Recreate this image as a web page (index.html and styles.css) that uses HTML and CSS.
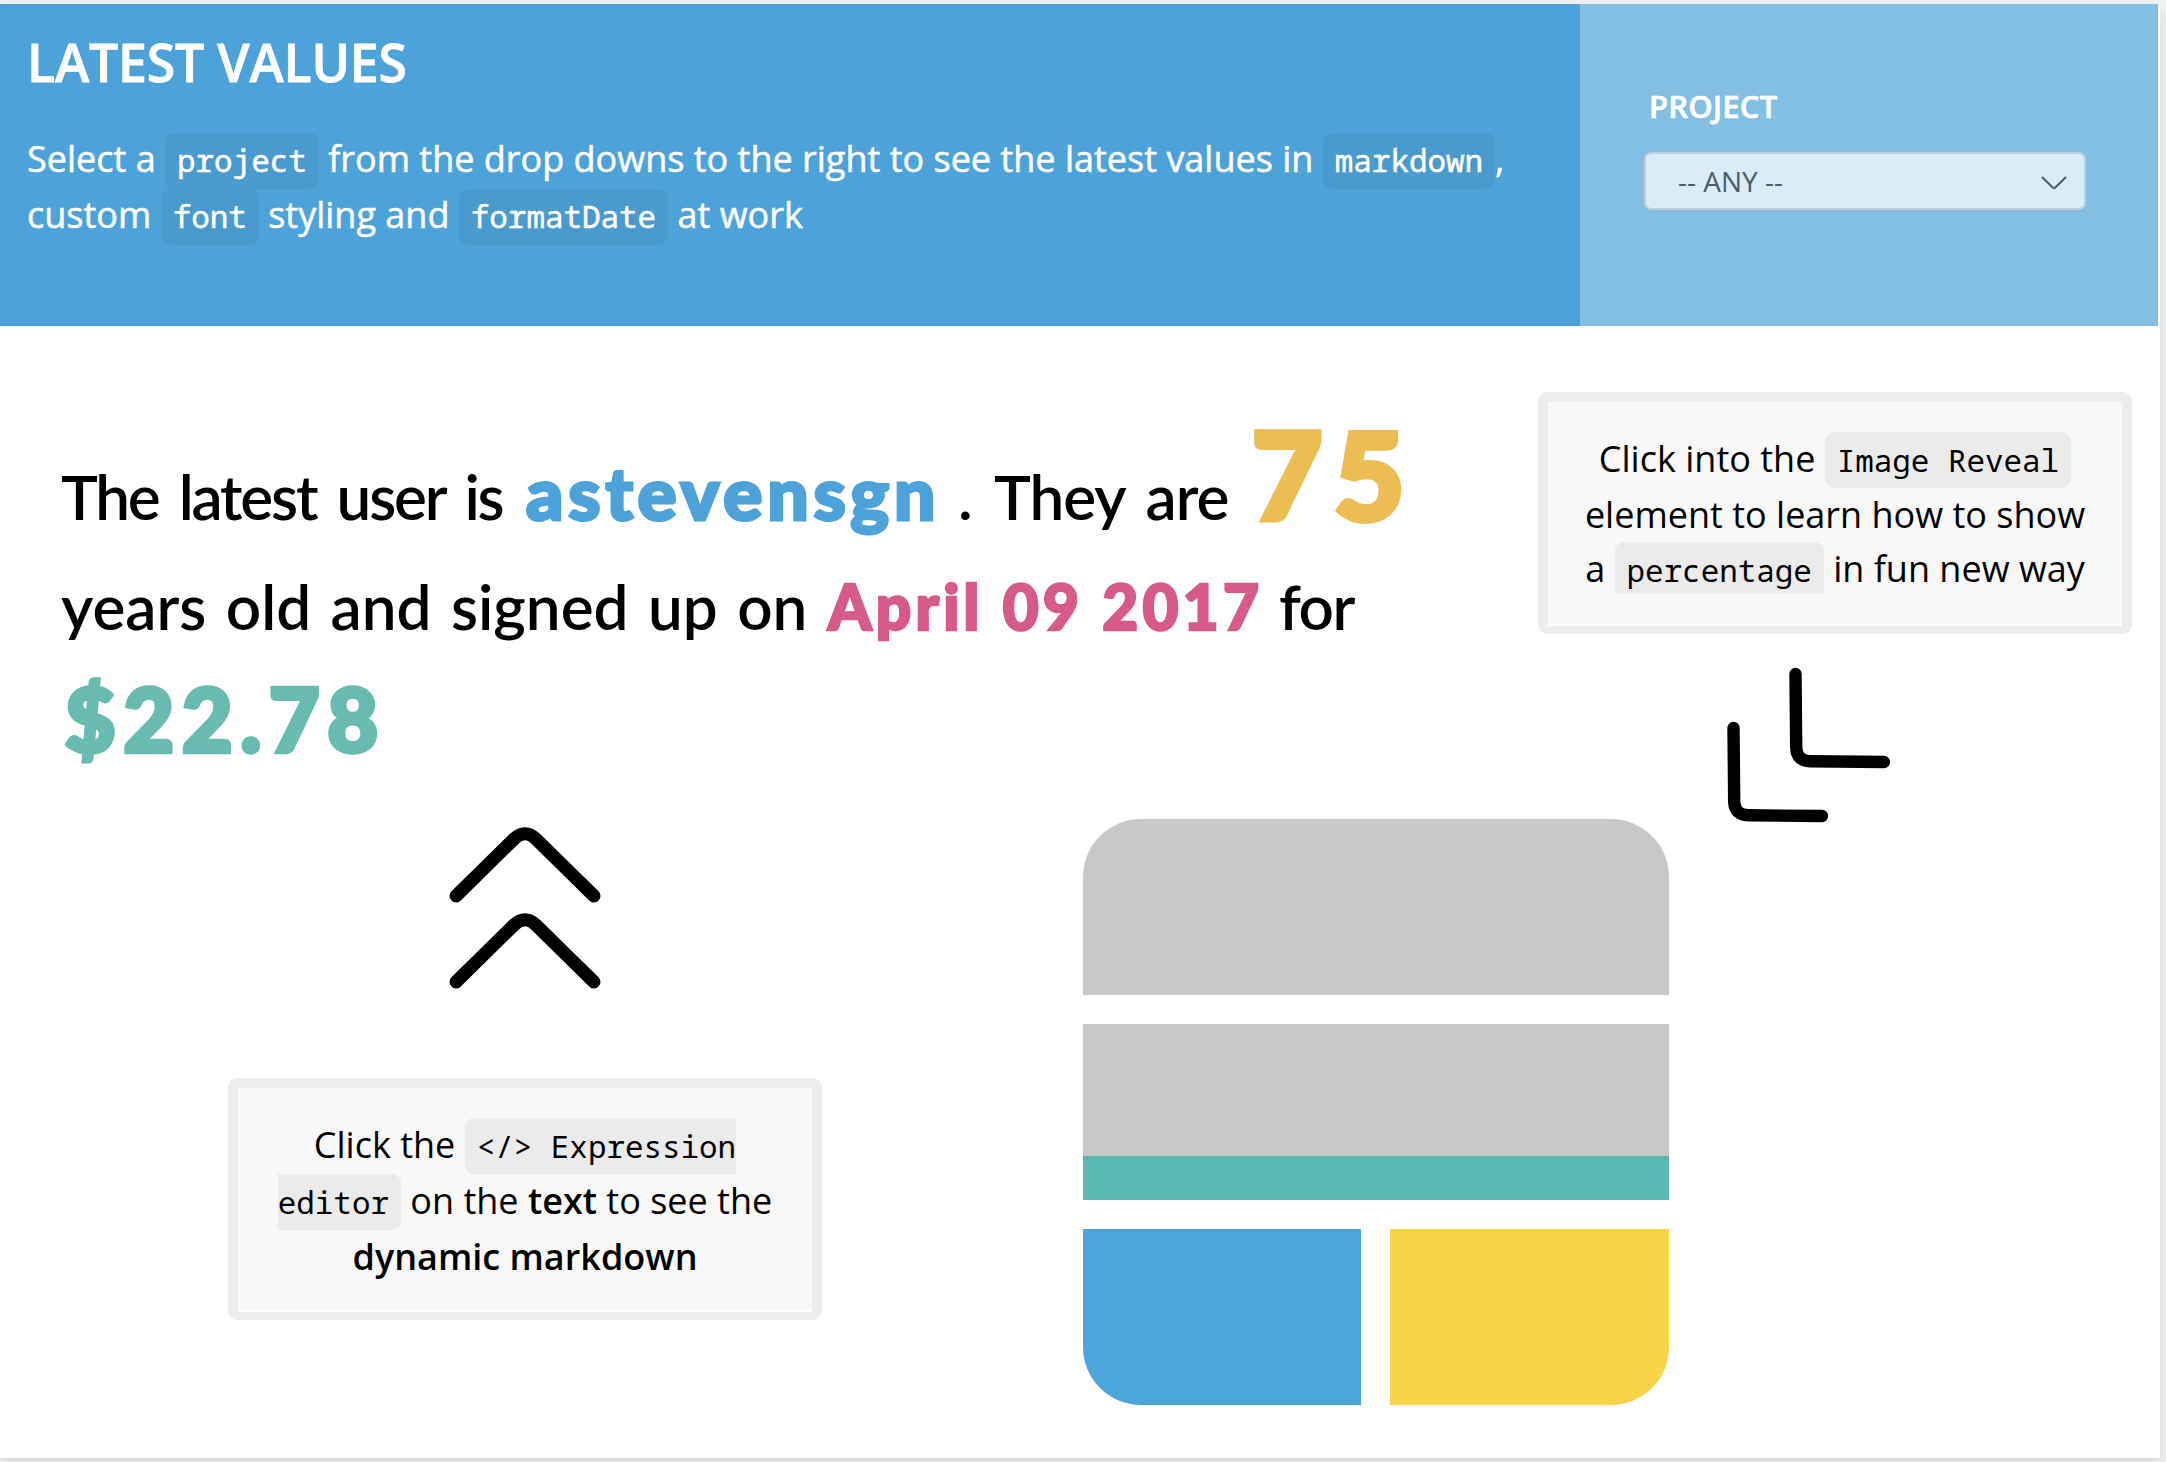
FILE: index.html
```
<!DOCTYPE html>
<html lang="en">
<head>
<meta charset="utf-8">
<title>Latest Values</title>
<link rel="stylesheet" href="styles.css">
</head>
<body>
<main class="page">
  <header class="header">
    <section class="intro">
      <h1 class="intro-title">LATEST VALUES</h1>
      <p class="intro-text">Select a <code>project</code> from the drop downs to the right to see the latest values in <code>markdown</code>,<br>custom <code>font</code> styling and <code>formatDate</code> at work</p>
    </section>
    <section class="filter">
      <div class="filter-label">PROJECT</div>
      <div class="select">
        <span>-- ANY --</span>
        <svg class="select-arrow" width="26" height="14" viewBox="0 0 26 14"><path d="M1.5 1.5 L12 11.8 Q13 12.6 14 11.8 L24.500 1.500" fill="none" stroke="#4a5d68" stroke-width="2" stroke-linecap="round"/></svg>
      </div>
    </section>
  </header>

  <div class="top-row">
    <div class="statement">
      <div class="line line-1">
        <span class="w-user-is">The latest user is</span><span class="name">astevensgn</span><span class="w-dot">.</span><span class="w-they">They are</span><span class="age">75</span>
      </div>
      <div class="line line-2">
        <span class="w-years">years old and signed up on</span><span class="date">April 09 2017</span><span class="w-for">for</span>
      </div>
      <div class="line line-3"><span class="amount">$22.78</span></div>
    </div>
    <aside class="hint-column">
      <div class="card">
        <p>Click into the <code>Image Reveal</code></p>
        <p>element to learn how to show</p>
        <p class="last-line">a <code>percentage</code> in fun new way</p>
      </div>
      <svg class="arrow-corner" width="170" height="160" viewBox="0 0 170 160"><g fill="none" stroke="#000" stroke-width="12.400" stroke-linecap="round"><path d="M67.500 8 L68.200 82 Q69 95 82 95.300 L156 96"/><path d="M5.500 62 L6.200 136 Q7 149 20 149.300 L94 150"/></g></svg>
    </aside>
  </div>

  <div class="bottom-row">
    <div class="guide-column">
      <svg class="arrow-up" width="156" height="168" viewBox="0 0 156 168"><g fill="none" stroke="#000" stroke-width="13" stroke-linecap="round"><path d="M9 76 L67 19 Q78 8.500 89 19 L147 76"/><path d="M9 162 L67 105 Q78 94.500 89 105 L147 162"/></g></svg>
      <div class="card">
        <p>Click the <code class="open-end">&lt;/&gt; Expression</code></p>
        <p><code class="open-start">editor</code> on the <b>text</b> to see the</p>
        <p><b>dynamic markdown</b></p>
      </div>
    </div>
    <div class="reveal">
      <div class="block block-top"></div>
      <div class="block block-middle"><div class="fill"></div></div>
      <div class="block-pair"><div class="block block-blue"></div><div class="block block-yellow"></div></div>
    </div>
  </div>
</main>
</body>
</html>
```
FILE: styles.css
```
* { box-sizing: border-box; margin: 0; padding: 0; }

body {
  width: 2166px;
  height: 1462px;
  padding-top: 4px;
  overflow: hidden;
  background: #f3f3f3;
  font-family: "Open Sans", sans-serif;
  color: #000;
}

.page {
  width: 2160px;
  height: 1454px;
  background: #fff;
  box-shadow: 0 6px 14px rgba(0, 0, 0, 0.13);
}

.header {
  display: grid;
  grid-template-columns: 1580px 578px;
  height: 322px;
  color: #fff;
}

.intro { background: #4da3d9; padding: 21px 27px; -webkit-text-stroke: 0.5px #fff; }

.intro-title {
  font-size: 51.800px;
  font-weight: 600;
  line-height: 74px;
  letter-spacing: -0.200px;
  -webkit-text-stroke-width: 0.8px;
}

.intro-text {
  margin-top: 32px;
  font-size: 36px;
  line-height: 56px;
  white-space: nowrap;
}

code {
  display: inline-block;
  height: 56px;
  padding: 0 12px;
  border-radius: 9px;
  background: #ebebeb;
  font-family: "Noto Sans Mono", "DejaVu Sans Mono", monospace;
  font-size: 30.900px;
  line-height: 56px;
  vertical-align: top;
}

.intro code { background: #4b9acd; position: relative; top: 2px; line-height: 54px; }

.filter { background: #83bee3; padding: 80px 0 0 64px; }

.filter-label {
  padding-left: 5px;
  font-size: 31px;
  font-weight: 600;
  line-height: 44px;
  letter-spacing: 0.200px;
  -webkit-text-stroke: 0.7px #fff;
}

.select {
  display: flex;
  justify-content: space-between;
  align-items: center;
  width: 442px;
  height: 58px;
  margin-top: 24px;
  padding: 0 17px 0 32px;
  border: 2px solid #bccfdb;
  border-radius: 7px;
  background: #daecf8;
  color: #4a5d68;
  font-size: 28px;
}

.select-arrow { margin-top: 3px; }

.top-row { display: flex; height: 493px; }

.statement {
  width: 1538px;
  padding: 94px 0 0 61px;
  font-family: Lato, sans-serif;
  font-size: 62px;
  font-weight: 600;
}

.line { display: flex; align-items: baseline; height: 108px; white-space: nowrap; }
.line span { flex: none; line-height: 108px; }
.line-1 { height: 132px; }
.line-3 { height: 124px; margin-top: 5px; }

.w-user-is { width: 465px; letter-spacing: -2.200px; word-spacing: 7px; }
.w-dot { width: 36px; }
.w-they { width: 258px; letter-spacing: -1px; word-spacing: 7px; }
.w-years { width: 767px; word-spacing: 4px; }
.w-for { letter-spacing: -1.500px; }

.name, .age, .date, .amount { font-weight: 900; -webkit-text-stroke: 3px currentColor; }
.name { width: 432px; font-size: 73px; letter-spacing: 4.900px; color: #4da3d9; }
.age { font-size: 121px; letter-spacing: 12px; color: #ebbd52; -webkit-text-stroke-width: 6px; }
.date { width: 451px; font-size: 62px; letter-spacing: 4.300px; color: #d65a8a; -webkit-text-stroke-width: 2.5px; }
.amount { padding-left: 4px; font-size: 87px; letter-spacing: 8px; color: #69bbb2; -webkit-text-stroke-width: 4.5px; }

.hint-column { width: 594px; padding-top: 66px; }

.card {
  width: 594px;
  height: 242px;
  padding-top: 29px;
  border: 10px solid #ededed;
  border-bottom-width: 8px;
  border-radius: 9px;
  background: linear-gradient(#f8f8f8, #f8f8f8) 0 0 / 100% calc(100% - 2px) no-repeat #fff;
  font-size: 36px;
  line-height: 56px;
  text-align: center;
  white-space: nowrap;
}

.card p { height: 56px; }
.card code { margin-top: 1px; }
.card .last-line { height: 53px; margin-top: -2px; overflow: hidden; }
.card .open-end { padding-right: 0; border-radius: 9px 0 0 9px; }
.card .open-start { padding-left: 0; border-radius: 0 9px 9px 0; }
.card b { font-weight: 600; }

.arrow-corner { display: block; margin: 32px 0 0 190px; overflow: visible; }

.bottom-row { display: flex; align-items: flex-start; }

.guide-column {
  display: flex;
  flex-direction: column;
  align-items: center;
  width: 594px;
  margin-left: 228px;
}

.arrow-up { display: block; margin: 1px 0 90px; overflow: visible; }

.reveal { display: flex; flex-direction: column; gap: 29px; width: 586px; margin-left: 261px; }
.block { height: 176px; background: #c8c8c8; }
.block-top { border-radius: 58px 58px 0 0; }
.block-middle { display: flex; align-items: flex-end; }
.fill { width: 100%; height: 44px; background: #5bb8b1; }
.block-pair { display: grid; grid-template-columns: 278px 279px; gap: 29px; }
.block-blue { background: #4ca5db; border-radius: 0 0 0 58px; }
.block-yellow { background: #f6d349; border-radius: 0 0 58px 0; }
```
